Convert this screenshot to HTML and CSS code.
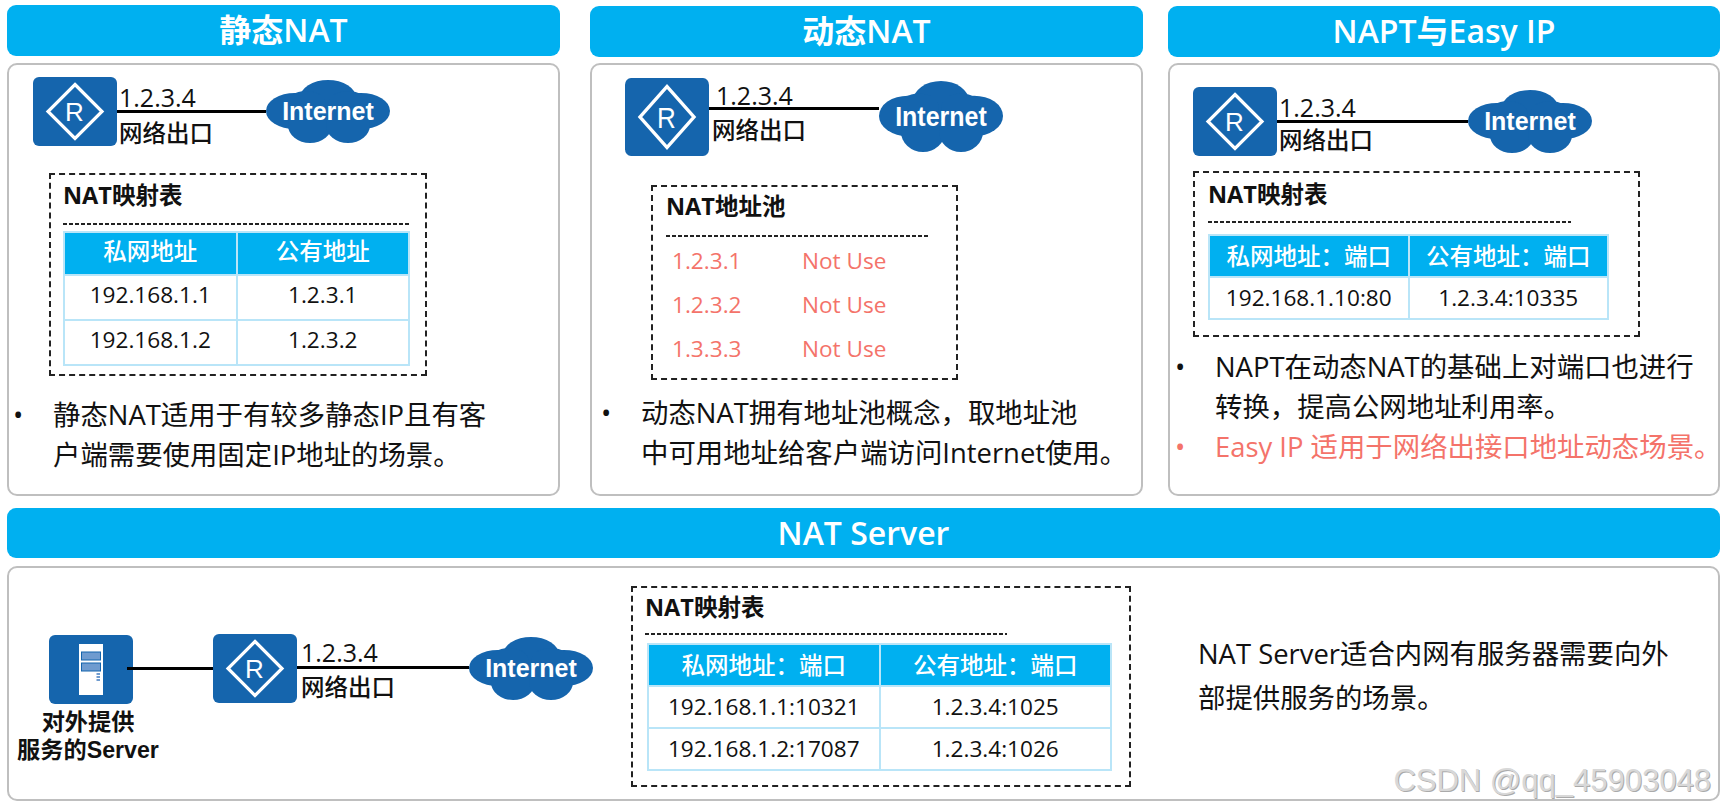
FILE: index.html
```html
<!DOCTYPE html>
<html lang="zh-CN">
<head>
<meta charset="utf-8">
<title>NAT</title>
<link rel="stylesheet" href="styles.css">
</head>
<body>
<svg class="defs" width="0" height="0" aria-hidden="true">
  <defs>
    <g id="cloud-shape" fill="#1565ad">
      <ellipse cx="29" cy="31" rx="29" ry="18"/>
      <ellipse cx="95" cy="31" rx="29" ry="18"/>
      <ellipse cx="62" cy="18" rx="28" ry="18"/>
      <ellipse cx="82" cy="24" rx="20" ry="13"/>
      <ellipse cx="40" cy="24" rx="20" ry="13"/>
      <ellipse cx="44" cy="45" rx="22" ry="18"/>
      <ellipse cx="82" cy="45" rx="22" ry="18"/>
    </g>
  </defs>
</svg>
<main class="board">
  <div class="top-row">
    <section class="col col-a">
      <h2 class="head">静态NAT</h2>
      <div class="box">
        <div class="net net-a">
          <svg class="router router-std" viewBox="0 0 84 69" preserveAspectRatio="none"><rect width="84" height="69" rx="6" fill="#1565ad"/><path d="M42 7.5L69 34.5L42 61.5L15 34.5Z" fill="none" stroke="#fff" stroke-width="3.2"/><text x="41.5" y="44" text-anchor="middle" class="r-letter">R</text></svg>
          <div class="link link-a"><span class="ip">1.2.3.4</span><span class="rule"></span><span class="port">网络出口</span></div>
          <svg class="cloud" viewBox="0 0 124 63"><use href="#cloud-shape"/><text x="62" y="40" text-anchor="middle" class="cloud-text">Internet</text></svg>
        </div>
        <div class="dash dash-a">
          <h3 class="dash-title">NAT映射表</h3>
          <div class="dots"></div>
          <table class="map map-a">
            <tr><th>私网地址</th><th>公有地址</th></tr>
            <tr><td>192.168.1.1</td><td>1.2.3.1</td></tr>
            <tr><td>192.168.1.2</td><td>1.2.3.2</td></tr>
          </table>
        </div>
        <ul class="notes notes-a">
          <li>静态NAT适用于有较多静态IP且有客<br>户端需要使用固定IP地址的场景。</li>
        </ul>
      </div>
    </section>

    <section class="col col-b">
      <h2 class="head">动态NAT</h2>
      <div class="box">
        <div class="net net-b">
          <svg class="router router-tall" viewBox="0 0 84 69" preserveAspectRatio="none"><rect width="84" height="69" rx="6" fill="#1565ad"/><path d="M42 7.5L69 34.5L42 61.5L15 34.5Z" fill="none" stroke="#fff" stroke-width="3.2"/><text x="41.5" y="44" text-anchor="middle" class="r-letter">R</text></svg>
          <div class="link link-b"><span class="ip ip-b">1.2.3.4</span><span class="rule"></span><span class="port port-b">网络出口</span></div>
          <svg class="cloud cloud-tall" viewBox="0 0 124 63" preserveAspectRatio="none"><use href="#cloud-shape"/><text x="62" y="40" text-anchor="middle" class="cloud-text">Internet</text></svg>
        </div>
        <div class="dash dash-b">
          <h3 class="dash-title">NAT地址池</h3>
          <div class="dots"></div>
          <dl class="pool">
            <dt>1.2.3.1</dt><dd>Not Use</dd>
            <dt>1.2.3.2</dt><dd>Not Use</dd>
            <dt>1.3.3.3</dt><dd>Not Use</dd>
          </dl>
        </div>
        <ul class="notes notes-b">
          <li>动态NAT拥有地址池概念，取地址池<br>中可用地址给客户端访问Internet使用。</li>
        </ul>
      </div>
    </section>

    <section class="col col-c">
      <h2 class="head">NAPT与Easy IP</h2>
      <div class="box">
        <div class="net net-c">
          <svg class="router router-std" viewBox="0 0 84 69" preserveAspectRatio="none"><rect width="84" height="69" rx="6" fill="#1565ad"/><path d="M42 7.5L69 34.5L42 61.5L15 34.5Z" fill="none" stroke="#fff" stroke-width="3.2"/><text x="41.5" y="44" text-anchor="middle" class="r-letter">R</text></svg>
          <div class="link link-c"><span class="ip ip-c">1.2.3.4</span><span class="rule"></span><span class="port port-c">网络出口</span></div>
          <svg class="cloud" viewBox="0 0 124 63"><use href="#cloud-shape"/><text x="62" y="40" text-anchor="middle" class="cloud-text">Internet</text></svg>
        </div>
        <div class="dash dash-c">
          <h3 class="dash-title">NAT映射表</h3>
          <div class="dots dots-c"></div>
          <table class="map map-c">
            <tr><th>私网地址：端口</th><th>公有地址：端口</th></tr>
            <tr><td>192.168.1.10:80</td><td>1.2.3.4:10335</td></tr>
          </table>
        </div>
        <ul class="notes notes-c">
          <li>NAPT在动态NAT的基础上对端口也进行<br>转换，提高公网地址利用率。</li>
          <li class="warn">Easy IP 适用于网络出接口地址动态场景。</li>
        </ul>
      </div>
    </section>
  </div>

  <section class="wide">
    <h2 class="head head-wide">NAT Server</h2>
    <div class="box box-wide">
      <div class="server-block">
        <svg class="router router-std" viewBox="0 0 84 69"><rect width="84" height="69" rx="6" fill="#1565ad"/><rect x="30" y="9" width="24" height="51" fill="#fff"/><rect x="32.5" y="17" width="19" height="8" fill="#6f9bcf" stroke="#1565ad" stroke-width="1"/><rect x="32.5" y="28" width="19" height="8" fill="#6f9bcf" stroke="#1565ad" stroke-width="1"/><rect x="47.5" y="38" width="3.5" height="2" fill="#6f9bcf"/><rect x="47.5" y="41" width="3.5" height="2" fill="#6f9bcf"/><rect x="47.5" y="44" width="3.5" height="2" fill="#6f9bcf"/></svg>
        <p class="server-label">对外提供<br>服务的Server</p>
      </div>
      <div class="net net-d">
        <span class="stub"></span>
        <svg class="router router-std" viewBox="0 0 84 69" preserveAspectRatio="none"><rect width="84" height="69" rx="6" fill="#1565ad"/><path d="M42 7.5L69 34.5L42 61.5L15 34.5Z" fill="none" stroke="#fff" stroke-width="3.2"/><text x="41.5" y="44" text-anchor="middle" class="r-letter">R</text></svg>
        <div class="link link-d"><span class="ip ip-d">1.2.3.4</span><span class="rule"></span><span class="port port-d">网络出口</span></div>
        <svg class="cloud" viewBox="0 0 124 63"><use href="#cloud-shape"/><text x="62" y="40" text-anchor="middle" class="cloud-text">Internet</text></svg>
      </div>
      <div class="dash dash-d">
        <h3 class="dash-title dash-title-d">NAT映射表</h3>
        <div class="dots dots-d"></div>
        <table class="map map-d">
          <tr><th>私网地址：端口</th><th>公有地址：端口</th></tr>
          <tr><td>192.168.1.1:10321</td><td>1.2.3.4:1025</td></tr>
          <tr><td>192.168.1.2:17087</td><td>1.2.3.4:1026</td></tr>
        </table>
      </div>
      <p class="server-note">NAT Server适合内网有服务器需要向外<br>部提供服务的场景。</p>
    </div>
    <span class="watermark">CSDN @qq_45903048</span>
  </section>
</main>
</body>
</html>
```
FILE: styles.css
```css
* { box-sizing: border-box; }
html, body { margin: 0; padding: 0; background: #fff; }
body {
  width: 1732px;
  height: 810px;
  overflow: hidden;
  font-family: "Open Sans", "Noto Sans CJK SC", sans-serif;
  color: #111;
}
.defs { position: absolute; }
.board { padding: 6px 12px 0 7px; }
.top-row { display: flex; }
.col { width: 553px; flex: none; }
.col-b { margin-left: 30px; }
.col-c { margin-left: 25px; width: 552px; }
.col-a .head { margin-top: -1px; margin-bottom: 7px; }

.head {
  margin: 0 0 6px;
  height: 51px;
  background: #00b0f0;
  border-radius: 9px;
  color: #fff;
  font-size: 32px;
  font-weight: 600;
  line-height: 50px;
  text-align: center;
}
.box {
  height: 433px;
  border: 2px solid #bfbfbf;
  border-radius: 10px;
  background: #fff;
}

.net { display: flex; align-items: flex-start; }
.net-a { padding: 12px 0 0 24px; height: 94px; }
.net-b { padding: 13px 0 0 33px; height: 106px; }
.net-c { padding: 22px 0 0 23px; height: 94px; }

.router { display: block; flex: none; }
.router-std { width: 84px; height: 69px; }
.router-tall { width: 84px; height: 78px; }
.r-letter { font-family: "Liberation Sans", sans-serif; font-size: 26px; fill: #fff; }
.cloud { display: block; flex: none; width: 124px; height: 63px; margin-top: 3px; }
.cloud-tall { height: 71px; }
.cloud-text { font-family: "Liberation Sans", sans-serif; font-size: 25px; font-weight: 700; fill: #fff; }

.link { display: flex; flex-direction: column; flex: none; }
.link-a { width: 149px; margin-top: 6px; }
.link-b { width: 170px; margin-top: 2px; }
.link-c { width: 191px; margin-top: 6px; }
.link-d { width: 172px; margin-top: 5px; }
.ip { height: 27px; line-height: 29px; padding-left: 2px; font-size: 25px; white-space: nowrap; }
.ip-b { padding-left: 7px; line-height: 30px; }
.ip-c { line-height: 28px; }
.ip-d { padding-left: 4px; line-height: 27px; }
.rule { height: 3px; background: #000; }
.port { padding-left: 2px; padding-top: 4px; line-height: 32px; font-size: 23.5px; font-weight: 500; white-space: nowrap; }
.port-b { padding-left: 3px; }
.port-c { padding-top: 1px; }
.port-d { padding-left: 4px; padding-top: 2px; }

.dash { border: 2px dashed #222; }
.dash-a { width: 378px; height: 203px; margin-left: 40px; margin-top: 14px; padding: 0 0 0 12px; }
.dash-b { width: 307px; height: 195px; margin-left: 59px; margin-top: 14px; padding: 0 0 0 13px; }
.dash-c { width: 447px; height: 166px; margin-left: 23px; margin-top: 12px; padding: 0 0 0 13px; }
.dash-d { width: 500px; height: 201px; flex: none; padding: 0 0 0 12px; margin-left: 38px; margin-top: 18px; }

.dash-title { margin: 2px 0 0; height: 46px; line-height: 36px; font-size: 23.5px; font-weight: 700; white-space: nowrap; }
.dash-title-d { height: 43px; line-height: 35px; }
.dash-b .dash-title { line-height: 34px; }
.dash-c .dash-title { margin-top: 3px; height: 45px; }
.dots {
  height: 2px;
  width: 346px;
  background: repeating-linear-gradient(90deg, #222 0 4px, transparent 4px 6px);
}
.dash-b .dots { width: 263px; }
.dots-c { width: 363px; }
.dots-d { width: 362px; }

.map {
  border-collapse: collapse;
  table-layout: fixed;
  width: 347px;
  margin-top: 6px;
}
.map th, .map td {
  border: 2px solid #b9e5f8;
  padding: 0;
  height: 45px;
  text-align: center;
  font-size: 22.6px;
  line-height: 30px;
  white-space: nowrap;
}
.map th {
  background: #00b0f0;
  color: #fff;
  font-weight: 500;
  font-size: 23.5px;
  height: 43px;
}
.map-a th, .map-a td { padding-bottom: 5px; }
.map-c { width: 401px; margin-top: 11px; }
.map-c th, .map-c td { height: 42px; }
.map-d { width: 465px; margin-top: 8px; margin-left: 2px; }
.map-d th, .map-d td { height: 42px; }

.pool {
  margin: 1px 0 0 6px;
  display: grid;
  grid-template-columns: 130px 1fr;
  grid-auto-rows: 44px;
  align-items: center;
  color: #f4736a;
  font-size: 22.6px;
}
.pool dt, .pool dd { margin: 0; }

.notes { list-style: none; margin: 0; padding: 0; font-size: 27.4px; line-height: 40px; white-space: nowrap; }
.notes li { position: relative; padding-left: 40px; }
.notes li::before { content: "•"; position: absolute; left: 0; top: 0; }
.notes-a { margin: 19px 0 0 4px; }
.notes-b { margin: 13px 0 0 9px; }
.notes-c { margin: 10px 0 0 5px; }
.warn { color: #f4736a; }

.wide { position: relative; margin-top: 12px; width: 1713px; }
.head-wide { height: 50px; margin-bottom: 8px; }
.box-wide { height: 235px; display: flex; align-items: flex-start; }
.server-block { width: 150px; flex: none; margin-left: 8px; margin-top: 67px; display: flex; flex-direction: column; align-items: center; padding-left: 0; }
.server-block .router { margin-left: -2px; }
.server-label { margin: 4px 0 0 -8px; width: 170px; text-align: center; font-family: "Liberation Sans", "Noto Sans CJK SC", sans-serif; font-size: 23.2px; font-weight: 700; line-height: 28px; white-space: nowrap; }
.net-d { margin-top: 66px; margin-left: -40px; flex: none; }
.stub { display: block; width: 86px; height: 3px; background: #000; margin-top: 33px; flex: none; }
.server-note { margin: 64px 0 0 67px; font-size: 27.4px; line-height: 44px; white-space: nowrap; }
.watermark {
  position: absolute;
  right: 9px;
  bottom: 2px;
  font-family: "Liberation Sans", sans-serif;
  font-size: 31px;
  color: #d8d8d8;
  text-shadow: 1px 1px 0 #aaa;
  white-space: nowrap;
}
```
